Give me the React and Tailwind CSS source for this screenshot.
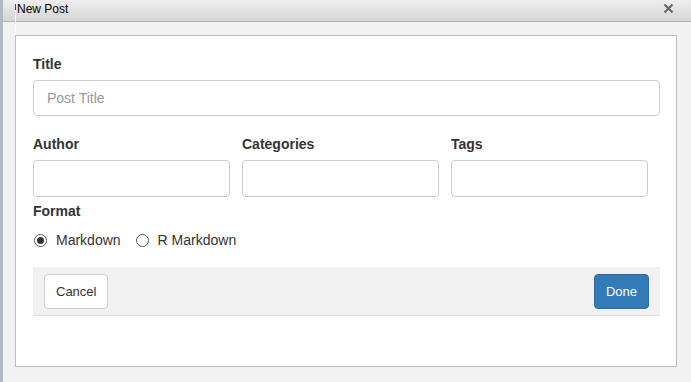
import React from "react";

function Radio({ checked, label }) {
  return (
    <label className="flex items-center h-[20px]">
      <span className="w-[13px] h-[13px] rounded-full border border-[#5a5a5a] bg-white flex items-center justify-center">
        {checked ? <span className="w-[7px] h-[7px] rounded-full bg-[#333]" /> : null}
      </span>
      <span className="ml-[9px] text-[14px] text-[#333]">{label}</span>
    </label>
  );
}

export default function App() {
  return (
    <div
      className="relative w-[691px] h-[382px] overflow-hidden bg-[#f1f2f1]"
      style={{ fontFamily: '"Liberation Sans", Arial, sans-serif' }}
    >
      <div className="h-[22px] border-b border-[#b2b2b2] bg-gradient-to-b from-[#eeeeee] to-[#d5d5d5] flex items-start justify-between pl-[17px] pr-[17px]">
        <span className="text-[12px] leading-[16px] pt-[1px] text-black">New Post</span>
        <svg width="11" height="11" viewBox="0 0 11 11" className="mt-[3px]">
          <path d="M1.5 1.5 L9.5 9.5 M9.5 1.5 L1.5 9.5" stroke="#686868" strokeWidth="2.2" strokeLinecap="butt" />
        </svg>
      </div>

      <div className="absolute left-0 top-0 w-[3px] h-full bg-[#b3b8be]" />
      <div className="absolute left-[15px] top-0 w-px h-[35px] bg-white" />
      <div className="absolute left-[15px] top-[4px] w-px h-[6px] bg-[#8a2a2a]" />

      <div className="pt-[13px] pl-[15px]">
        <div className="w-[662px] h-[332px] border border-[#bdbdbd] bg-white pl-[17px] pt-[18px]">
          <div className="text-[14px] leading-[20px] font-bold text-[#333]">Title</div>
          <div className="mt-[6px] w-[627px] h-[36px] border border-[#cccccc] rounded-[4px] flex items-center pl-[13px] text-[14px] text-[#999]">
            Post Title
          </div>

          <div className="mt-[18px] w-[615px] grid grid-cols-3 gap-x-[12px]">
            {["Author", "Categories", "Tags"].map((l) => (
              <div key={l}>
                <div className="text-[14px] leading-[20px] font-bold text-[#333]">{l}</div>
                <div className="mt-[6px] h-[37px] border border-[#cccccc] rounded-[4px]" />
              </div>
            ))}
          </div>

          <div className="mt-[4px] text-[14px] leading-[20px] font-bold text-[#333]">Format</div>
          <div className="mt-[9px] flex items-center pl-[1px]">
            <Radio checked label="Markdown" />
            <div className="w-[15px]" />
            <Radio label="R Markdown" />
          </div>

          <div className="mt-[17px] w-[627px] h-[49px] bg-[#f1f1f1] border-b border-[#dcdcdc] flex items-start justify-between pl-[11px] pr-[11px] pt-[7px]">
            <button className="h-[35px] px-[11px] bg-white border border-[#cccccc] rounded-[4px] text-[13px] text-[#333]">
              Cancel
            </button>
            <button className="h-[35px] px-[11px] bg-[#337ab7] border border-[#2e6da4] rounded-[4px] text-[13px] text-white">
              Done
            </button>
          </div>
        </div>
      </div>
    </div>
  );
}
